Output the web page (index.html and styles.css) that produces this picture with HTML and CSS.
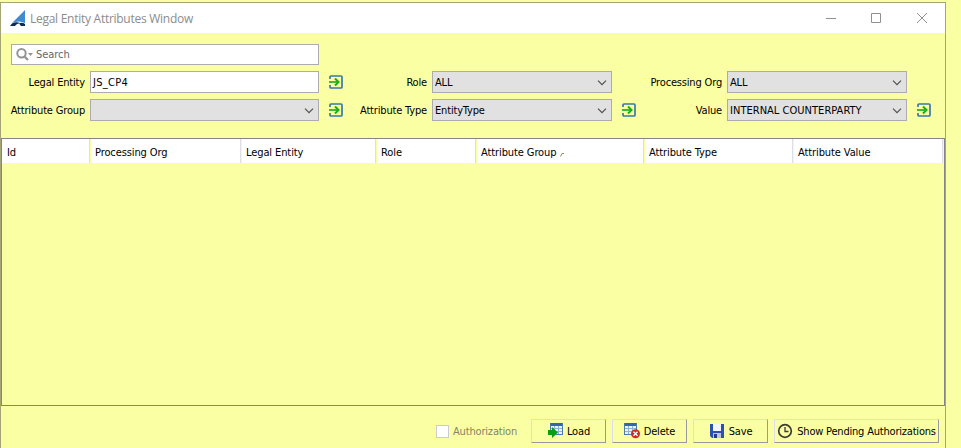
FILE: index.html
```html
<!DOCTYPE html>
<html lang="en">
<head>
<meta charset="utf-8">
<title>Legal Entity Attributes Window</title>
<link rel="stylesheet" href="styles.css">
</head>
<body>
<svg width="0" height="0" class="defs">
  <symbol id="go" viewBox="0 0 14 14"><path d="M1 4V2Q1 1 2 1H12Q13 1 13 2V12Q13 13 12 13H2Q1 13 1 12V10" fill="none" stroke="#3878a8" stroke-width="1.700"/><path d="M0 7H9" stroke="#45b83c" stroke-width="2"/><path d="M6 3.5L9.5 7L6 10.5" fill="none" stroke="#18b018" stroke-width="2"/></symbol>
  <symbol id="chev" viewBox="0 0 10 6"><path d="M1 .7L5 4.7L9 .7" fill="none" stroke="#505050" stroke-width="1.2"/></symbol>
  <symbol id="sheet" viewBox="0 0 13 12"><path d="M0 0H13V12H0Z" fill="#8fb4d2"/><path d="M0 0H13V3H0Z" fill="#3268a4"/><path d="M0 0H1V12H0ZM12 0H13V12H12ZM0 11H13V12H0Z" fill="#487caf"/><path d="M1 3H4V5H1ZM5 3H8V5H5ZM9 3H12V5H9ZM1 6H4V8H1ZM5 6H8V8H5ZM9 6H12V8H9ZM1 9H4V11H1ZM5 9H8V11H5ZM9 9H12V11H9Z" fill="#e8f3fa"/></symbol>
</svg>
<div class="window">
  <header class="titlebar">
    <svg class="logo" width="16" height="17" viewBox="0 0 16 17"><path d="M15 0V13Q9 10 2 13Z" fill="#408bd0"/><path d="M0 16L2 13.500Q6 11.500 10 13Q6 14 5 16Z" fill="#112b58"/><path d="M9 13.500Q12 12 15 14V16H11Z" fill="#112b58"/></svg>
    <h1>Legal Entity Attributes Window</h1>
    <svg class="controls" width="102" height="12" viewBox="0 0 102 12" fill="none" stroke="#909090"><path d="M0 6.5H10M45.500 1.500H54.500V10.500H45.500ZM91 1L101 11M101 1L91 11"/></svg>
  </header>
  <main class="form">
    <div class="search"><svg width="18" height="13" viewBox="0 0 18 13"><circle cx="5.500" cy="5.200" r="4.200" fill="none" stroke="#949494" stroke-width="2"/><path d="M8.500 8.500L12 12" stroke="#949494" stroke-width="2.200"/><path d="M12 5H17L14.500 8Z" fill="#949494"/></svg><span>Search</span></div>
    <div class="grid">
      <label>Legal Entity</label><div class="field text">JS_CP4</div><svg class="go"><use href="#go"/></svg>
      <label>Role</label><div class="field">ALL<svg class="chev"><use href="#chev"/></svg></div><span></span>
      <label>Processing Org</label><div class="field">ALL<svg class="chev"><use href="#chev"/></svg></div><span></span>
      <label>Attribute Group</label><div class="field"><svg class="chev"><use href="#chev"/></svg></div><svg class="go"><use href="#go"/></svg>
      <label>Attribute Type</label><div class="field">EntityType<svg class="chev"><use href="#chev"/></svg></div><svg class="go"><use href="#go"/></svg>
      <label>Value</label><div class="field caps">INTERNAL COUNTERPARTY<svg class="chev"><use href="#chev"/></svg></div><svg class="go"><use href="#go"/></svg>
    </div>
  </main>
  <section class="table">
    <div class="head"><div>Id</div><div>Processing Org</div><div>Legal Entity</div><div>Role</div><div>Attribute Group<svg class="sort" width="4" height="5" viewBox="0 0 4 5"><path d="M.5 4.500L2 1.500H4" fill="none" stroke="#8a8a50"/></svg></div><div>Attribute Type</div><div>Attribute Value</div></div>
  </section>
  <footer class="actions">
    <div class="check"><i></i><span>Authorization</span></div>
    <div class="button"><svg width="16" height="16" viewBox="0 0 16 16"><use href="#sheet" x="3" y="0" width="13" height="12"/><path d="M1 7H5V4L11 9.500L5 15V12H1Z" fill="#08a010"/></svg><span>Load</span></div>
    <div class="button"><svg width="16" height="16" viewBox="0 0 16 16"><use href="#sheet" x="0" y="0" width="13" height="12"/><circle cx="11.500" cy="10.800" r="4.500" fill="#d02b20"/><path d="M9.500 8.800L13.500 12.800M13.500 8.800L9.500 12.800" stroke="#fff" stroke-width="1.300"/></svg><span>Delete</span></div>
    <div class="button"><svg width="16" height="16" viewBox="0 0 16 16"><path d="M1 1H15V15H3L1 13Z" fill="#2d52ad"/><path d="M4 1H12V8H4Z" fill="#f2f6fd"/><path d="M4 10H12V15H4Z" fill="#bcc6d8"/><path d="M5 11H8V15H5Z" fill="#233f8b"/></svg><span>Save</span></div>
    <div class="button wide"><svg width="16" height="16" viewBox="0 0 16 16" fill="none" stroke="#3c3c34"><circle cx="8" cy="8" r="6.300" stroke-width="1.700"/><path d="M8 4V8.500H11.500" stroke-width="1.300"/></svg><span>Show Pending Authorizations</span></div>
  </footer>
</div>
</body>
</html>
```
FILE: styles.css
```css
* { box-sizing: border-box; }
body { margin: 0; padding-top: 2px; height: 448px; overflow: hidden; background: #fbffa3; color: #000; font: 11px/14px "DejaVu Sans Condensed", "Noto Sans", sans-serif; letter-spacing: -.17px; white-space: nowrap; }
.defs { position: absolute; }
svg { flex: none; }
.window { width: 946px; height: 450px; border: 1px solid #a5a573; }
.titlebar { display: flex; align-items: center; height: 30px; padding: 0 17px 0 9px; background: #fff; }
.titlebar h1 { margin: 0 0 0 4px; padding-top: 1px; color: #8c8c8c; font: 12px/16px "Open Sans", sans-serif; letter-spacing: -.27px; }
.controls { margin-left: auto; }
.form { height: 105px; padding-top: 11px; }
.search { display: flex; align-items: center; width: 308px; height: 21px; margin-left: 10px; padding-left: 4px; border: 1px solid #acacac; background: #fff; color: #666; }
.search span { margin-left: 2px; letter-spacing: -.05px; }
.grid { display: grid; grid-template-columns: 89px 229px 24px 89px 180px 24px 91px 180px 24px; grid-template-rows: 22px 22px; row-gap: 6px; margin-top: 6px; align-items: center; }
.grid label { padding: 2px 5px 0 0; text-align: right; }
.field { display: flex; align-items: center; height: 22px; padding: 1px 4px 0 2px; border: 1px solid #acacb0; background: #e1e1e1; }
.text { background: #fff; letter-spacing: .3px; }
.caps { letter-spacing: .03px; }
.chev { width: 10px; height: 6px; margin-left: auto; }
.go { width: 14px; height: 14px; justify-self: end; }
.table { width: 944px; height: 268px; border: 1px solid #84848a; }
.head { display: grid; grid-template-columns: 88px 151px 135px 100px 168px 149px 150px; height: 24px; background: #fff; }
.head div { display: flex; align-items: center; padding: 3px 0 0 5px; border-right: 1px solid #dedee5; box-shadow: 1px 0 #fbffa3; letter-spacing: -.1px; }
.sort { margin: 3px 0 0 4px; }
.actions { display: flex; align-items: center; justify-content: flex-end; gap: 6px; height: 24px; margin-top: 13px; padding-right: 6px; }
.check { display: flex; align-items: center; gap: 4px; width: 89px; color: #83836a; }
.check i { width: 13px; height: 13px; border: 1px solid #ccc; background: #fff; }
.check span, .button span { padding-top: 1px; }
.button { display: flex; align-items: center; justify-content: center; gap: 4px; width: 75px; height: 24px; border: 1px solid; border-color: #dedee5 #999aa0 #999aa0 #dedee5; }
.wide { width: 165px; letter-spacing: -.2px; }
```
